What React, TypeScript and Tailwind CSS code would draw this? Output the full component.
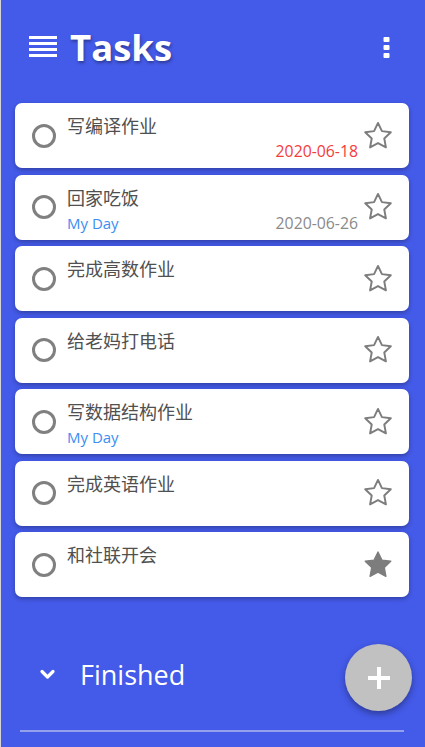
import React from "react";

type Task = { title: string; myDay?: boolean; date?: string; overdue?: boolean; starred?: boolean };

const tasks: Task[] = [
  { title: "写编译作业", date: "2020-06-18", overdue: true },
  { title: "回家吃饭", myDay: true, date: "2020-06-26" },
  { title: "完成高数作业" },
  { title: "给老妈打电话" },
  { title: "写数据结构作业", myDay: true },
  { title: "完成英语作业" },
  { title: "和社联开会", starred: true },
];

function Star({ filled }: { filled?: boolean }) {
  return (
    <svg width="32" height="32" viewBox="0 0 24 24">
      <polygon
        points="12,2.2 14.95,8.35 21.6,9.2 16.7,13.85 17.95,20.55 12,17.3 6.05,20.55 7.3,13.85 2.4,9.2 9.05,8.35"
        fill={filled ? "#7d7d7d" : "none"}
        stroke="#7d7d7d"
        strokeWidth={filled ? 1 : 1.45}
        strokeLinejoin="round"
      />
    </svg>
  );
}

function Card({ t }: { t: Task }) {
  return (
    <div className="flex h-[65px] w-[394px] items-center rounded-[7px] bg-white shadow-[0_2px_4px_rgba(0,0,0,0.28)]">
      <div className="ml-[17px] h-[24px] w-[24px] shrink-0 rounded-full border-[3px] border-[#808080]" />
      <div className="ml-[11px] flex h-full flex-1 flex-col pt-[11px]">
        <div className="text-[18px] leading-[24px] text-[#505050]">{t.title}</div>
        {(t.myDay || t.date) && (
          <div className="mt-[3px] flex items-center justify-between leading-[20px]">
            <span className="text-[15px] text-[#3b8ef2]">{t.myDay ? "My Day" : ""}</span>
            {t.date && (
              <span className={"text-[15.8px] " + (t.overdue ? "text-[#f43c3c]" : "text-[#8a8a8a]")}>{t.date}</span>
            )}
          </div>
        )}
      </div>
      <div className="ml-[4px] mr-[15px] flex shrink-0 items-center">
        <Star filled={t.starred} />
      </div>
    </div>
  );
}

export default function App() {
  return (
    <div
      className="relative h-[747px] w-[425px] overflow-hidden border-l border-[#d4d4d4] bg-[#445ae8]"
      style={{ fontFamily: '"Open Sans", "Noto Sans CJK SC", sans-serif' }}
    >
      <div className="flex h-[94px] items-center pl-[28px] pr-[35px]">
        <svg width="28" height="22" viewBox="0 0 28 22" className="shrink-0">
          <rect x="0" y="0" width="28" height="3" fill="white" />
          <rect x="0" y="6" width="28" height="3" fill="white" />
          <rect x="0" y="12" width="28" height="3" fill="white" />
          <rect x="0" y="18" width="28" height="3" fill="white" />
        </svg>
        <div className="ml-[13px] text-[36.5px] font-bold leading-none text-white [text-shadow:1px_2px_3px_rgba(0,0,0,0.35)]">
          Tasks
        </div>
        <div className="flex-1" />
        <svg width="7" height="21" viewBox="0 0 7 21">
          <rect x="0.5" y="0" width="6" height="5" rx="1" fill="white" />
          <rect x="0.5" y="8" width="6" height="5" rx="1" fill="white" />
          <rect x="0.5" y="16" width="6" height="5" rx="1" fill="white" />
        </svg>
      </div>

      <div className="ml-[14px] mt-[9px] flex flex-col gap-[6.5px]">
        {tasks.map((t, i) => (
          <Card key={i} t={t} />
        ))}
      </div>

      <div className="ml-[38px] mt-[49px] flex h-[56px] items-center">
        <svg width="17" height="11" viewBox="0 0 17 11">
          <polyline points="3,2.5 8.5,8 14,2.5" fill="none" stroke="white" strokeWidth="3.2" strokeLinecap="round" strokeLinejoin="round" />
        </svg>
        <div className="ml-[24px] text-[27px] leading-none text-white">Finished</div>
      </div>

      <div className="ml-[19px] mt-[28px] h-[2px] w-[384px] bg-[#95a0ec]" />

      <button className="absolute left-[344px] top-[644px] flex h-[67px] w-[67px] items-center justify-center rounded-full bg-[#c1c1c1] shadow-[0_3px_6px_rgba(0,0,0,0.35)]">
        <svg width="22" height="22" viewBox="0 0 22 22">
          <rect x="9" y="0" width="4" height="22" fill="white" />
          <rect x="0" y="9" width="22" height="4" fill="white" />
        </svg>
      </button>
    </div>
  );
}
